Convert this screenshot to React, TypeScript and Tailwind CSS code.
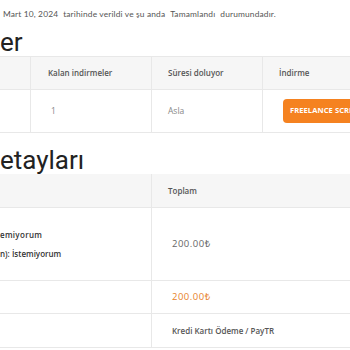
import React from "react";

const cell = "flex items-center border-r border-[#e8e8e8]";

export default function App() {
  return (
    <div className="w-[350px] h-[350px] overflow-hidden bg-white" style={{ fontFamily: '"Open Sans", "Noto Sans", sans-serif' }}>
      <div className="h-[28px] flex items-center pl-[3px] text-[8.4px] text-[#555] whitespace-nowrap tracking-[0.15px]" style={{ fontFamily: 'Lato, "Open Sans", sans-serif' }}>
        <span>Mart 10, 2024</span>
        <span className="ml-[5px]">tarihinde verildi ve şu anda</span>
        <span className="ml-[5px]">Tamamlandı</span>
        <span className="ml-[5px]">durumundadır.</span>
      </div>
      <div className="h-[28px] text-[26px] leading-[28px] text-[#222] whitespace-nowrap" style={{ fontFamily: 'Roboto, sans-serif' }}>er</div>

      <div className="w-[420px] border-t border-b border-[#e8e8e8]">
        <div className="grid grid-cols-[31px_121px_111px_157px] h-[33px] bg-[#f6f6f6] border-b border-[#e8e8e8] text-[8px] font-semibold text-[#555] whitespace-nowrap">
          <div className={cell}></div>
          <div className={cell + " pl-[17px]"}>Kalan indirmeler</div>
          <div className={cell + " pl-[16px]"}>Süresi doluyor</div>
          <div className="flex items-center pl-[16px]">İndirme</div>
        </div>
        <div className="grid grid-cols-[31px_121px_111px_157px] h-[42px] text-[8.5px] text-[#888] whitespace-nowrap">
          <div className={cell}></div>
          <div className={cell + " pl-[20px]"}>1</div>
          <div className={cell + " pl-[16px]"}>Asla</div>
          <div className="flex items-center pl-[20px]">
            <div className="h-[24px] px-[7px] flex items-center rounded-[4px] bg-[#f58220] text-white font-bold text-[7.5px] tracking-[0.1px]">FREELANCE SCRIPT İNDİR</div>
          </div>
        </div>
      </div>

      <div className="mt-[13px] h-[28px] text-[26px] leading-[28px] text-[#222] whitespace-nowrap" style={{ fontFamily: 'Roboto, sans-serif' }}>etayları</div>

      <div className="w-[420px] text-[8px] whitespace-nowrap">
        <div className="grid grid-cols-[152px_268px] h-[34px] bg-[#f6f6f6] border-b border-[#e8e8e8] font-semibold text-[#555]">
          <div className={cell}></div>
          <div className="flex items-center pl-[16px]">Toplam</div>
        </div>
        <div className="grid grid-cols-[152px_268px] h-[73px] border-b border-[#e8e8e8]">
          <div className={cell + " flex-col !items-start justify-center gap-[7px] font-semibold text-[#333]"}>
            <div className="tracking-[0.3px]">emiyorum</div>
            <div>n): İstemiyorum</div>
          </div>
          <div className="flex items-center pl-[20px] text-[9.5px] tracking-[0.5px] text-[#666]">200.00₺</div>
        </div>
        <div className="grid grid-cols-[152px_268px] h-[33px] border-b border-[#e8e8e8]">
          <div className={cell}></div>
          <div className="flex items-center pl-[20px] text-[9.5px] tracking-[0.5px] text-[#e8832a]">200.00₺</div>
        </div>
        <div className="grid grid-cols-[152px_268px] h-[34px] border-b border-[#e8e8e8]">
          <div className={cell}></div>
          <div className="flex items-center pl-[20px] font-semibold text-[#555]">Kredi Kartı Ödeme / PayTR</div>
        </div>
      </div>
    </div>
  );
}
